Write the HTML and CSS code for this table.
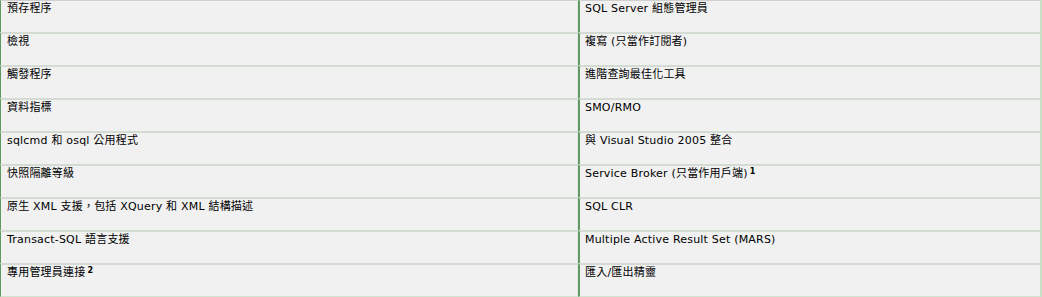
FILE: index.html
```html
<!DOCTYPE html>
<html lang="zh-Hant">
<head>
<meta charset="utf-8">
<link rel="stylesheet" href="styles.css">
</head>
<body>
<table class="features">
  <tr><td class="c1">預存程序</td><td class="c2">SQL Server 組態管理員</td></tr>
  <tr><td class="c1">檢視</td><td class="c2">複寫 (只當作訂閱者)</td></tr>
  <tr><td class="c1">觸發程序</td><td class="c2">進階查詢最佳化工具</td></tr>
  <tr><td class="c1">資料指標</td><td class="c2">SMO/RMO</td></tr>
  <tr><td class="c1">sqlcmd 和 osql 公用程式</td><td class="c2">與 Visual Studio 2005 整合</td></tr>
  <tr><td class="c1">快照隔離等級</td><td class="c2">Service Broker (只當作用戶端)<span class="fn">1</span></td></tr>
  <tr><td class="c1">原生 XML 支援，包括 XQuery 和 XML 結構描述</td><td class="c2">SQL CLR</td></tr>
  <tr><td class="c1">Transact-SQL 語言支援</td><td class="c2">Multiple Active Result Set (MARS)</td></tr>
  <tr><td class="c1">專用管理員連接<span class="fn">2</span></td><td class="c2">匯入/匯出精靈</td></tr>
</table>
</body>
</html>
```
FILE: styles.css
```css
html, body {
  margin: 0;
  padding: 0;
  background: #f1f1f1;
}
.features {
  width: 1042px;
  border-collapse: separate;
  border-spacing: 0;
  font-family: "DejaVu Sans", Verdana, "Noto Sans CJK TC", sans-serif;
  font-size: 11px;
  letter-spacing: 0.2px;
  line-height: 14px;
  color: #000;
}
.features td {
  height: 33px;
  box-sizing: border-box;
  vertical-align: top;
  background: #f1f1f1;
  border-top: 2px solid #d3dbd3;
  padding: 1px 5px 0 5px;
  white-space: nowrap;
}
.features tr:first-child td {
  border-top: 1px solid #d0d0d0;
  height: 32px;
}
.features tr:last-child td {
  height: 34px;
  border-bottom: 1px solid #cfe3cf;
}
.features .c1 {
  width: 578px;
  border-left: 1px solid #5f9a63;
  border-right: 1px solid #e2e8e2;
  padding-left: 6px;
}
.features .c2 {
  width: 464px;
  border-left: 2px solid #5f9a63;
  border-right: 2px solid #c6e0c6;
  padding-left: 5px;
}
.fn {
  font-size: 8px;
  font-weight: 600;
  vertical-align: 3px;
  line-height: 0;
  margin-left: 2px;
}
```
